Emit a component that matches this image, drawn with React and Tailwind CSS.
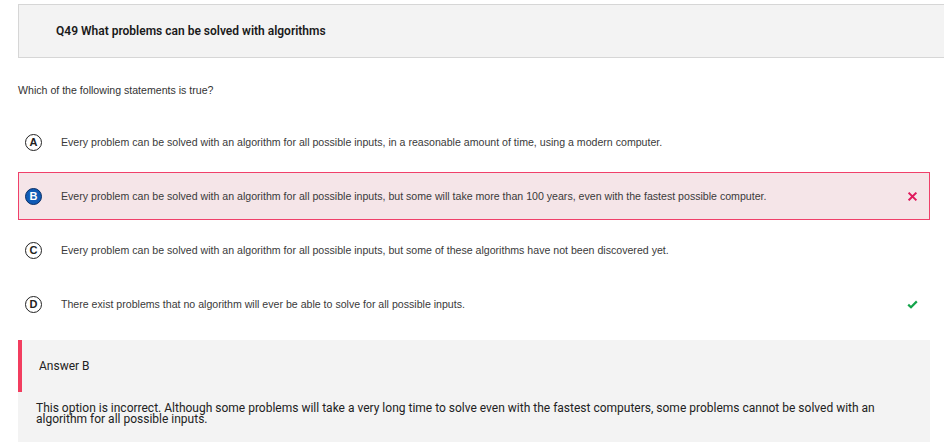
import React from 'react';

const options = [
  { key: 'A', text: 'Every problem can be solved with an algorithm for all possible inputs, in a reasonable amount of time, using a modern computer.' },
  { key: 'B', text: 'Every problem can be solved with an algorithm for all possible inputs, but some will take more than 100 years, even with the fastest possible computer.', selected: true, wrong: true },
  { key: 'C', text: 'Every problem can be solved with an algorithm for all possible inputs, but some of these algorithms have not been discovered yet.' },
  { key: 'D', text: 'There exist problems that no algorithm will ever be able to solve for all possible inputs.', correct: true },
];

const Badge = ({ letter, selected }) => (
  selected ? (
    <div className="w-[17px] h-[17px] rounded-full bg-[#0f5bb5] border border-[#0a2f66] flex items-center justify-center text-white text-[11px] font-bold leading-none font-['Liberation_Sans',Arial,sans-serif]">
      {letter}
    </div>
  ) : (
    <div className="w-[17px] h-[17px] rounded-full border-[1.5px] border-[#222] flex items-center justify-center text-[#222] text-[11px] font-bold leading-none font-['Liberation_Sans',Arial,sans-serif]">
      {letter}
    </div>
  )
);

const Option = ({ opt }) => (
  <div
    className={
      'h-[48px] flex items-center pl-[6px] pr-[11px] border ' +
      (opt.wrong ? 'border-[#f0406a] bg-[#f5e5e8]' : 'border-transparent')
    }
  >
    <Badge letter={opt.key} selected={opt.selected} />
    <p className="ml-[19px] pt-[2px] flex-1 text-[10.6px] text-[#3a3a3a] font-['Liberation_Sans',Arial,sans-serif]">{opt.text}</p>
    {opt.wrong && (
      <svg width="9" height="9" viewBox="0 0 10 10" className="mr-[1px]">
        <path d="M1.5 1.5 L8.5 8.5 M8.5 1.5 L1.5 8.5" stroke="#e0195c" strokeWidth="2.2" strokeLinecap="square" />
      </svg>
    )}
    {opt.correct && (
      <svg width="11" height="9" viewBox="0 0 11 9">
        <path d="M1.2 4.6 L4 7.2 L9.8 1.4" stroke="#13a44a" strokeWidth="2.2" fill="none" />
      </svg>
    )}
  </div>
);

export default function App() {
  return (
    <div className="min-h-screen bg-white pt-[4px] overflow-hidden font-['Liberation_Sans',Arial,sans-serif]">
      <div className="ml-[18px] mr-[-20px] h-[54px] bg-[#f3f3f3] border-y border-l border-[#d6d6d6] flex items-center pl-[37px]">
        <h1 className="text-[12px] font-semibold text-[#1a1a1a] font-['Roboto',sans-serif]">
          Q49 What problems can be solved with algorithms
        </h1>
      </div>

      <p className="ml-[18px] mt-[26px] text-[10.6px] text-[#333] leading-[12px]">Which of the following statements is true?</p>

      <div className="ml-[18px] mr-[14px] mt-[22px] flex flex-col gap-[6px]">
        {options.map((o) => (
          <Option key={o.key} opt={o} />
        ))}
      </div>

      <div className="ml-[18px] mr-[14px] mt-[12px] bg-[#f3f3f3] pb-[20px] font-['Roboto',sans-serif]">
        <div className="h-[52px] border-l-4 border-[#f23d5f] flex items-center pl-[17px]">
          <span className="text-[12px] text-[#222]">Answer B</span>
        </div>
        <p className="pl-[18px] pr-[50px] pt-[11px] text-[12px] leading-[11px] text-[#222]">
          This option is incorrect. Although some problems will take a very long time to solve even with the fastest computers, some problems cannot be solved with an algorithm for all possible inputs.
        </p>
      </div>
    </div>
  );
}
